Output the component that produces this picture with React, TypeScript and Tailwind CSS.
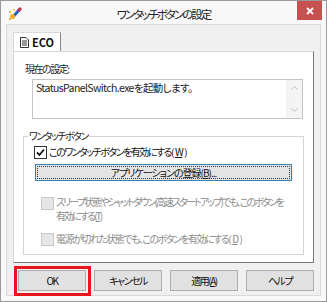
const font = "font-['Noto_Sans_CJK_JP','Noto_Sans',sans-serif] [font-feature-settings:'palt']";
const body = 'text-[10px] leading-[14px] tracking-[-1.5px] whitespace-nowrap';

function CheckBox({ checked, disabled }: { checked?: boolean; disabled?: boolean }) {
  return (
    <span
      className={`flex h-[13px] w-[13px] shrink-0 items-center justify-center border ${
        disabled ? 'border-[#c8c8c8] bg-[#e6e6e6]' : 'border-[#333333] bg-white'
      }`}
    >
      {checked && (
        <svg width="9" height="9" viewBox="0 0 9 9">
          <path d="M1 4.5 L3.5 7 L8 1.5" fill="none" stroke="#111" strokeWidth="1.8" />
        </svg>
      )}
    </span>
  );
}

function DialogButton({ label, mnemonic }: { label: string; mnemonic?: string }) {
  return (
    <button className={`flex h-[21px] w-[68px] items-center justify-center border border-[#adadad] bg-[#e1e1e1] text-[#111] ${body} tracking-[-0.8px]`}>
      {label}
      {mnemonic && (
        <>
          (<span className="underline">{mnemonic}</span>)
        </>
      )}
    </button>
  );
}

export default function App() {
  return (
    <div className={`h-[302px] w-[327px] border border-[#9a9a9a] bg-[#f8f8f8] ${font}`}>
      {/* title bar */}
      <div className="relative flex h-[23px] items-center justify-center">
        <svg className="absolute left-[7px] top-[5px]" width="16" height="15" viewBox="0 0 16 15">
          <path d="M4 12 L12 3" stroke="#2c5fc8" strokeWidth="3" />
          <path d="M10 5 L13 2" stroke="#c8324a" strokeWidth="3" />
          <circle cx="4.5" cy="10.5" r="2.5" fill="#f0b020" />
          <circle cx="2" cy="6" r="1.2" fill="#f5c030" />
          <circle cx="6" cy="4" r="1" fill="#f5c030" />
          <circle cx="2" cy="13" r="1" fill="#e0a020" />
        </svg>
        <span className="mt-[4px] text-[11.5px] tracking-[-2px] text-[#222]">ワンタッチボタンの設定</span>
        <div className="absolute right-[4px] top-0 flex h-[19px] w-[25px] items-center justify-center bg-[#c75050]">
          <svg width="8" height="8" viewBox="0 0 8 8">
            <path d="M1 1 L7 7 M7 1 L1 7" stroke="white" strokeWidth="1.8" />
          </svg>
        </div>
      </div>

      {/* client area */}
      <div className="mx-[5px] h-[272px] border border-[#dadada] bg-[#f0f0f0] px-[6px] pt-[7px]">
        {/* tab */}
        <div className="flex">
          <div className="flex h-[19px] w-[48px] items-center gap-[3px] border border-b-0 border-[#d9d9d9] border-r-[#888] bg-white pl-[6px]">
            <svg width="9" height="11" viewBox="0 0 9 11">
              <path d="M0.5 0.5 H6 L8.5 3 V10.5 H0.5 Z" fill="white" stroke="#333" />
              <path d="M2 4 H7 M2 6 H7 M2 8 H7" stroke="#333" />
            </svg>
            <span className="text-[11px] font-bold text-[#111]">ECO</span>
          </div>
        </div>

        {/* panel */}
        <div className="h-[212px] border border-[#d9d9d9] border-b-[#7a7a7a] border-r-[#7a7a7a] bg-white px-[9px] pt-[10px]">
          <div className={`pl-[2px] text-[#222] ${body} tracking-[-0.6px]`}>現在の設定:</div>
          <div className="ml-[9px] mr-[1px] mt-[3px] flex h-[40px] border border-[#c4c4c4]">
            <div className="flex-1 whitespace-nowrap pl-[3px] pt-[1px] text-[10.5px] leading-[14px] tracking-[-0.6px] text-[#222]">
              StatusPanelSwitch.exeを起動します。
            </div>
            <div className="flex w-[16px] flex-col items-center justify-between bg-[#f4f4f4] py-[6px]">
              <svg width="7" height="4" viewBox="0 0 7 4">
                <path d="M0.5 3.5 L3.5 0.5 L6.5 3.5" fill="none" stroke="#c0c0c0" />
              </svg>
              <svg width="7" height="4" viewBox="0 0 7 4">
                <path d="M0.5 0.5 L3.5 3.5 L6.5 0.5" fill="none" stroke="#c0c0c0" />
              </svg>
            </div>
          </div>

          {/* group box */}
          <div className="relative mt-[17px] h-[119px] border border-[#d5d5d5] px-[10px] pt-[8px]">
            <span className={`absolute -top-[8px] left-[4px] bg-white px-[1px] text-[#222] ${body}`}>
              ワンタッチボタン
            </span>
            <label className={`flex items-center gap-[2px] text-[#111] ${body}`}>
              <CheckBox checked />
              このワンタッチボタンを有効にする(<span className="underline">W</span>)
            </label>
            <div className="mx-[1px] mt-[5px] border border-[#3c7fb1] bg-[#e5e5e5] p-[1px]">
              <div className={`flex h-[13px] items-center justify-center border border-dotted border-[#333] text-[#111] ${body} tracking-[-1px]`}>
                アプリケーションの登録(<span className="underline">B</span>)...
              </div>
            </div>
            <div className={`ml-[7px] mt-[14px] flex gap-[2px] text-[#8a8a8a] ${body}`}>
              <div className="pt-[2px]">
                <CheckBox disabled />
              </div>
              <div className="tracking-[-1.9px]">
                スリープ状態やシャットダウン(高速スタートアップ)でも、このボタンを
                <br />
                有効にする(<span className="underline">T</span>)
              </div>
            </div>
            <div className={`ml-[7px] mt-[9px] flex items-center gap-[2px] text-[#8a8a8a] ${body}`}>
              <CheckBox disabled />
              電源が切れた状態でも、このボタンを有効にする(<span className="underline">D</span>)
            </div>
          </div>
        </div>

        {/* buttons */}
        <div className="mt-[7px] flex gap-[8px] pl-[5px]">
          <div className="relative">
            <DialogButton label="OK" />
            <div className="absolute -bottom-[5px] -left-[4px] -right-[5px] -top-[4px] border-[3px] border-[#e8161e]" />
          </div>
          <DialogButton label="キャンセル" />
          <DialogButton label="適用" mnemonic="A" />
          <DialogButton label="ヘルプ" />
        </div>
      </div>
    </div>
  );
}
